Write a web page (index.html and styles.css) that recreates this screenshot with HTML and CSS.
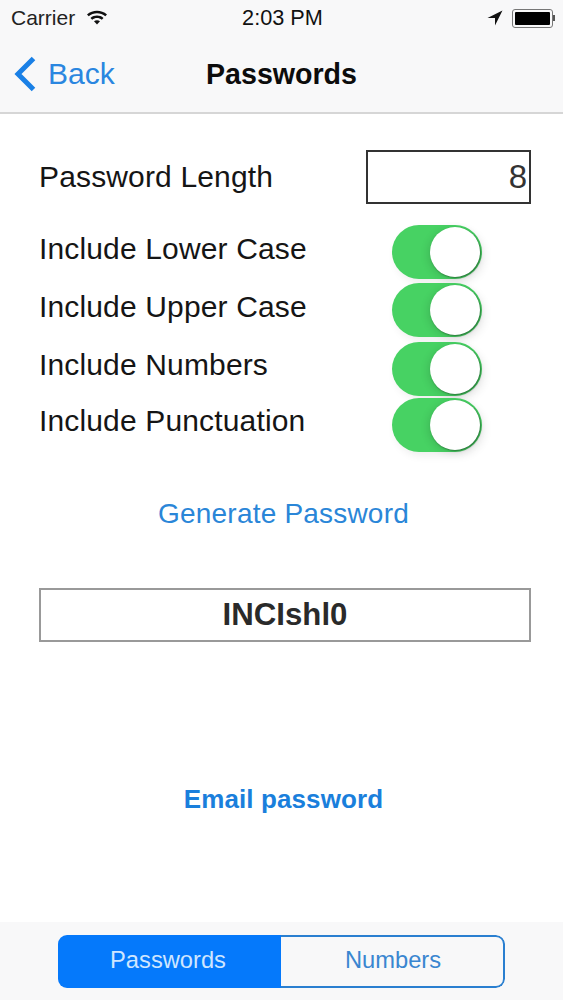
FILE: index.html
```html
<!DOCTYPE html>
<html lang="en">
  <head>
    <meta charset="UTF-8" />
    <meta name="viewport" content="width=device-width, initial-scale=1.0" />
    <title>Passwords</title>
    <link rel="stylesheet" href="styles.css">
  </head>
  <body>
    <div class="screen">
      <div class="top-bar">
        <div class="status">
          <div class="status-left">
            <span>Carrier</span>
            <svg class="wifi" width="22" height="16" viewBox="0 0 22 16">
              <path d="M1 5.500C6.500 0.600 15.500 0.600 21 5.500L19.300 7.300C14.700 3.200 7.300 3.200 2.700 7.300Z" />
              <path d="M4.500 9C8.200 5.800 13.800 5.800 17.500 9L15.800 10.800C13 8.500 9 8.500 6.200 10.800Z" />
              <path d="M11 15.500L8 12.300C9.700 11 12.300 11 14 12.300Z" />
            </svg>
          </div>
          <div class="status-time">2:03 PM</div>
          <div class="status-right">
            <svg width="16" height="16" viewBox="0 0 15 15">
              <path d="M14.500 0.500L0.500 7.500H7.500V14.500Z" />
            </svg>
            <div class="battery"><div class="battery-fill"></div></div>
            <div class="battery-tip"></div>
          </div>
        </div>
        <div class="nav">
          <a class="back" href="#">
            <svg width="24" height="36" viewBox="0 0 24 36">
              <path d="M20.500 2.500L5 18L20.500 33.500" />
            </svg>
            <span>Back</span>
          </a>
          <h1>Passwords</h1>
        </div>
      </div>

      <div class="content">
        <div class="row length-row">
          <label>Password Length</label>
          <div class="length-box">8</div>
        </div>
        <div class="options">
          <div class="row option-1">
            <label>Include Lower Case</label>
            <div class="switch"><div class="knob"></div></div>
          </div>
          <div class="row option-2">
            <label>Include Upper Case</label>
            <div class="switch"><div class="knob"></div></div>
          </div>
          <div class="row option-3">
            <label>Include Numbers</label>
            <div class="switch"><div class="knob"></div></div>
          </div>
          <div class="row option-4">
            <label>Include Punctuation</label>
            <div class="switch"><div class="knob"></div></div>
          </div>
        </div>
        <a class="generate" href="#">Generate Password</a>
        <div class="result">INCIshl0</div>
        <a class="email" href="#">Email password</a>
      </div>

      <div class="bottom-bar">
        <div class="segments">
          <div class="segment active">Passwords</div>
          <div class="segment">Numbers</div>
        </div>
      </div>
    </div>
  </body>
</html>
```

FILE: styles.css
```css
* {
  box-sizing: border-box;
}
body {
  margin: 0;
  background: white;
  font-family: "Liberation Sans", Arial, sans-serif;
  color: #111;
}
a {
  text-decoration: none;
}
.screen {
  display: flex;
  flex-direction: column;
  height: 1000px;
  overflow: hidden;
}

/* top */
.top-bar {
  height: 114px;
  background-color: #f8f8f9;
  border-bottom: 2px solid #d6d6d6;
}
.status {
  display: grid;
  grid-template-columns: 1fr auto 1fr;
  align-items: center;
  height: 36px;
  padding: 0 8px 0 11px;
  font-size: 21px;
}
.status-left {
  display: flex;
  align-items: center;
  gap: 11px;
  color: #222;
}
.wifi {
  fill: #111;
  margin-top: -3px;
}
.status-time {
  margin-left: -1px;
  font-size: 21.7px;
  color: #111;
}
.status-right {
  display: flex;
  align-items: center;
  justify-content: flex-end;
  fill: #111;
}
.status-right svg {
  margin-right: 9px;
}
.battery {
  width: 41px;
  height: 19px;
  padding: 2px;
  border: 1px solid #777;
  border-radius: 3px;
}
.battery-fill {
  height: 100%;
  background-color: #000;
  border-radius: 1px;
}
.battery-tip {
  width: 2px;
  height: 6px;
  background-color: #555;
}
.nav {
  position: relative;
  display: flex;
  align-items: center;
  justify-content: center;
  height: 76px;
}
.nav h1 {
  margin: 0;
  font-size: 28.6px;
  font-weight: bold;
  color: #0c0c0c;
}
.back {
  position: absolute;
  left: 13px;
  top: 20px;
  display: flex;
  align-items: center;
  gap: 11px;
  font-size: 30px;
  color: #2a86e0;
}
.back svg {
  fill: none;
  stroke: #1a80e6;
  stroke-width: 5;
}

/* form */
.content {
  flex: 1;
  display: flex;
  flex-direction: column;
  padding: 36px 32px 0 39px;
}
.row {
  display: flex;
  align-items: center;
  justify-content: space-between;
}
.row label {
  font-size: 30px;
  letter-spacing: 0.15px;
  color: #151515;
}
.length-row {
  height: 54px;
}
.length-box {
  width: 165px;
  height: 54px;
  padding: 0 2px 0 0;
  border: 2px solid #333;
  font-size: 33px;
  line-height: 50px;
  text-align: right;
  color: #333;
}
.options {
  display: flex;
  flex-direction: column;
  margin-top: 21px;
}
.option-1,
.option-2,
.option-3,
.option-4 {
  height: 54px;
  padding-right: 49px;
}
.option-1 label,
.option-2 label {
  margin-top: -6px;
}
.option-3 label,
.option-4 label {
  margin-top: -8px;
}
.option-2 {
  margin-top: 4px;
}
.option-3 {
  margin-top: 5px;
}
.option-4 {
  margin-top: 2px;
}
.switch {
  position: relative;
  width: 90px;
  height: 54px;
  background-color: #47d263;
  border-radius: 27px;
  box-shadow: 3px 4px 9px rgba(0, 0, 0, 0.07);
}
.knob {
  position: absolute;
  top: 2px;
  right: 2px;
  width: 50px;
  height: 50px;
  background: white;
  border-radius: 50%;
  box-shadow: 1px 1px 2px rgba(0, 0, 0, 0.42), -2px 2px 8px rgba(0, 0, 0, 0.12);
}
.generate {
  align-self: center;
  margin: 46px 0 0 -3px;
  font-size: 28px;
  letter-spacing: 0.2px;
  color: #2a86d8;
}
.result {
  height: 54px;
  margin-top: 58px;
  border: 2px solid #999;
  font-size: 31.2px;
  font-weight: bold;
  line-height: 50px;
  text-align: center;
  color: #2a2a2a;
}
.email {
  align-self: center;
  margin: 142px 0 0 -3px;
  font-size: 26px;
  letter-spacing: 0.1px;
  font-weight: bold;
  color: #1a7fdc;
}

/* bottom */
.bottom-bar {
  height: 78px;
  padding: 13px 58px 12px;
  background-color: #f8f8f9;
}
.segments {
  display: flex;
  height: 53px;
  border-radius: 9px;
  overflow: hidden;
}
.segment {
  flex: 1;
  padding-left: 2px;
  border: 2px solid #2a7fd0;
  border-left: none;
  border-radius: 0 9px 9px 0;
  font-size: 23.7px;
  line-height: 47px;
  text-align: center;
  color: #3a86d0;
}
.segment.active {
  flex: none;
  width: 223px;
  padding: 0 3px 0 0;
  border: none;
  border-radius: 0;
  line-height: 51px;
  background-color: #0579fb;
  color: #cfe6ff;
}
```
